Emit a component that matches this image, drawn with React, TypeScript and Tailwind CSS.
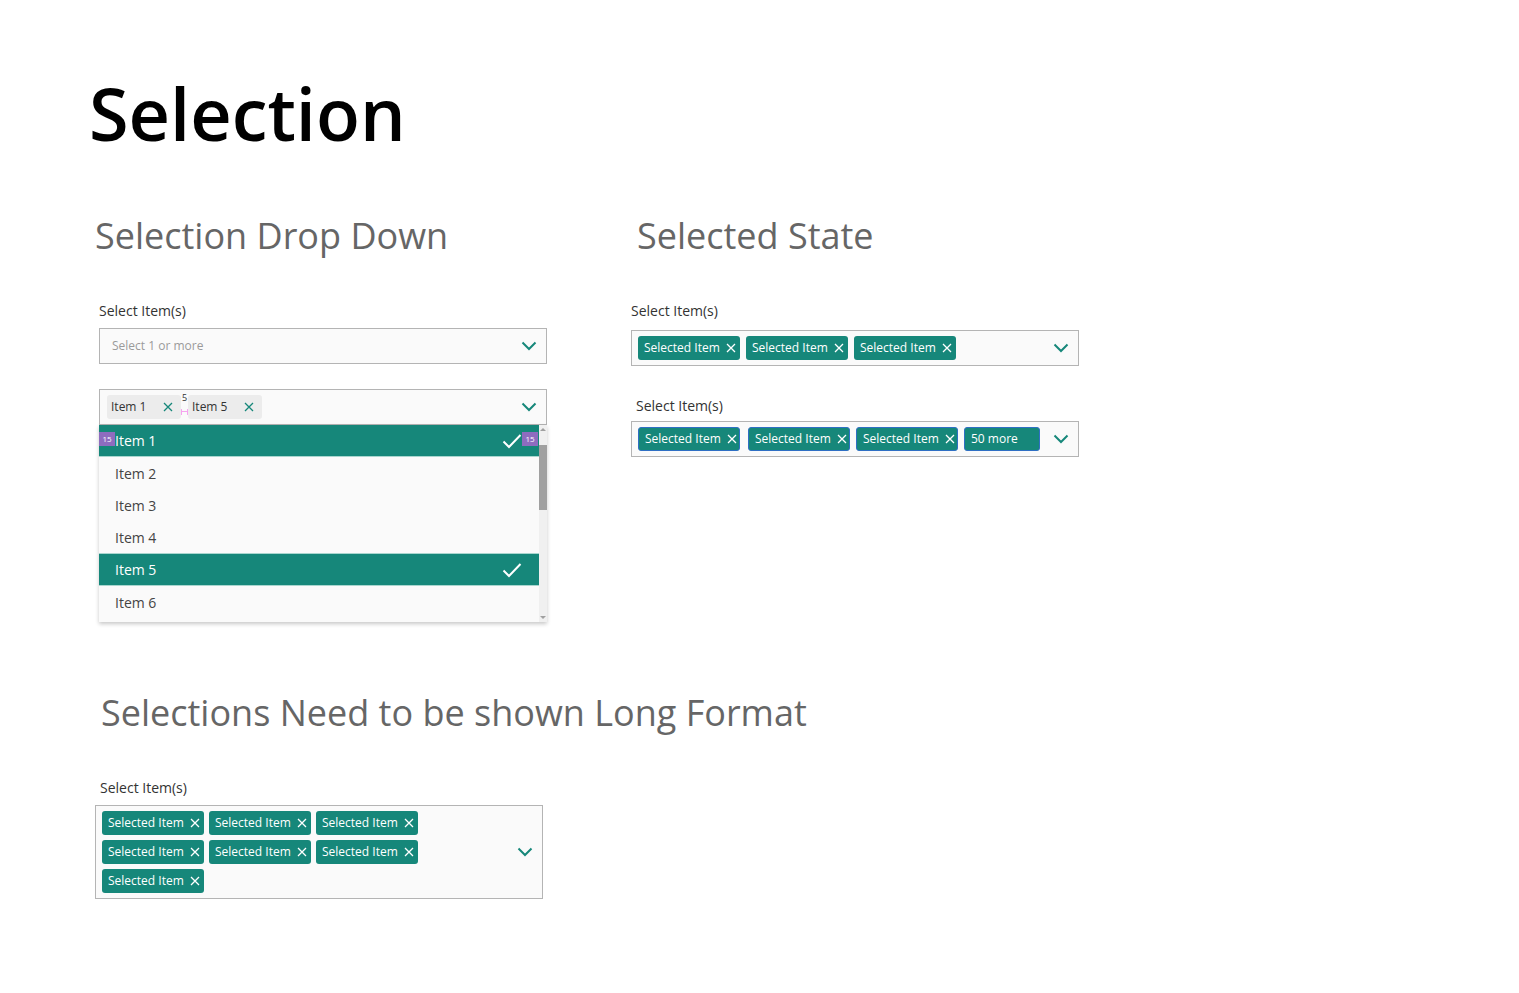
import React from "react";

const TEAL = "#16877a";

function Chevron() {
  return (
    <svg width="16" height="10" viewBox="0 0 16 10" className="shrink-0">
      <path d="M1.5 1.5 L8 8 L14.5 1.5" fill="none" stroke={TEAL} strokeWidth="2" />
    </svg>
  );
}

function Cross({ color = "#fff" }: { color?: string }) {
  return (
    <svg width="10" height="10" viewBox="0 0 10 10" className="shrink-0">
      <path d="M1 1 L9 9 M9 1 L1 9" fill="none" stroke={color} strokeWidth="1.3" />
    </svg>
  );
}

function Check() {
  return (
    <svg width="20" height="16" viewBox="0 0 20 16" className="shrink-0">
      <path d="M1.5 8.5 L7 14 L18.5 2" fill="none" stroke="#fff" strokeWidth="2" />
    </svg>
  );
}

function Chip({ label = "Selected Item", outlined = false }: { label?: string; outlined?: boolean }) {
  return (
    <span
      className={
        "flex h-[24px] w-[102px] shrink-0 items-center gap-[6px] rounded-[3px] bg-[#16877a] pl-[6px] pr-[5px] text-[12px] text-white " +
        (outlined ? "border border-[#2f6fc4]" : "")
      }
    >
      <span className="flex-1 whitespace-nowrap">{label}</span>
      <Cross />
    </span>
  );
}

function Label({ children }: { children: React.ReactNode }) {
  return <div className="text-[14px] leading-[18px] text-[#333]">{children}</div>;
}

function Badge() {
  return (
    <span className="flex h-[14px] w-[16px] items-center justify-center bg-[#8e6cbf] text-[8px] leading-none text-white">
      15
    </span>
  );
}

function Row({ text, selected, badges }: { text: string; selected?: boolean; badges?: boolean }) {
  if (selected) {
    return (
      <div className="relative flex h-[32px] items-center border-b border-[#a9d6cf] bg-[#16877a] pl-[16px] pr-[17px] text-[14px] text-white">
        {badges && (
          <span className="absolute left-0 top-[7px]">
            <Badge />
          </span>
        )}
        <span className="flex-1">{text}</span>
        <Check />
        {badges && (
          <span className="absolute right-[1px] top-[7px]">
            <Badge />
          </span>
        )}
      </div>
    );
  }
  return <div className="flex h-[32px] items-center pl-[16px] text-[14px] text-[#444]">{text}</div>;
}

export default function App() {
  return (
    <div className="min-h-screen bg-white font-['Open_Sans',sans-serif] text-[#333]">
      <h1 className="pl-[89px] pt-[70px] text-[72px] font-semibold leading-[86px] text-black">Selection</h1>

      <div className="mt-[58px] flex">
        {/* left column */}
        <div className="ml-[95px] w-[452px]">
          <h2 className="whitespace-nowrap text-[36px] leading-[44px] text-[#666]">Selection Drop Down</h2>
          <div className="mt-[44px] pl-[4px]">
            <Label>Select Item(s)</Label>
            <div className="mt-[8px] flex h-[36px] w-[448px] items-center border border-[#b4b4b4] bg-[#fafafa] pl-[12px] pr-[9px]">
              <span className="flex-1 text-[12px] text-[#9a9a9a]">Select 1 or more</span>
              <Chevron />
            </div>

            <div className="mt-[25px] w-[448px]">
              <div className="flex h-[36px] items-center border border-[#b4b4b4] bg-[#fafafa] pl-[7px] pr-[9px]">
                <span className="flex h-[24px] w-[74px] items-center gap-[6px] rounded-[3px] bg-[#ececec] pl-[4px] pr-[8px] text-[12px] text-[#333]">
                  <span className="flex-1">Item 1</span>
                  <Cross color={TEAL} />
                </span>
                <span className="relative h-[24px] w-[7px] shrink-0">
                  <span className="absolute left-0 top-[14px] h-[6px] w-[7px] border-x border-[#f6a3f0]" />
                  <span className="absolute left-0 top-[16px] h-px w-[7px] bg-[#f6a3f0]" />
                  <span className="absolute left-[1px] -top-[2px] text-[9px] leading-none text-[#333]">5</span>
                </span>
                <span className="flex h-[24px] w-[74px] items-center gap-[6px] rounded-[3px] bg-[#ececec] pl-[4px] pr-[8px] text-[12px] text-[#333]">
                  <span className="flex-1">Item 5</span>
                  <Cross color={TEAL} />
                </span>
                <span className="flex-1" />
                <Chevron />
              </div>

              <div className="flex h-[197px] bg-[#fafafa] shadow-[0_2px_4px_rgba(0,0,0,0.22)]">
                <div className="flex-1">
                  <Row text="Item 1" selected badges />
                  <Row text="Item 2" />
                  <Row text="Item 3" />
                  <Row text="Item 4" />
                  <div className="border-t border-[#a9d6cf]">
                    <Row text="Item 5" selected />
                  </div>
                  <Row text="Item 6" />
                </div>
                <div className="flex w-[8px] flex-col items-center bg-[#f0f0f0]">
                  <span className="mt-[3px] h-0 w-0 border-x-[3px] border-b-[3px] border-x-transparent border-b-[#a0a0a0]" />
                  <span className="mt-[14px] h-[65px] w-[8px] bg-[#a0a0a0]" />
                  <span className="flex-1" />
                  <span className="mb-[3px] h-0 w-0 border-x-[3px] border-t-[3px] border-x-transparent border-t-[#a0a0a0]" />
                </div>
              </div>
            </div>
          </div>
        </div>

        {/* right column */}
        <div className="ml-[84px] w-[448px]">
          <h2 className="whitespace-nowrap pl-[6px] text-[36px] leading-[44px] text-[#666]">Selected State</h2>
          <div className="mt-[44px]">
            <Label>Select Item(s)</Label>
            <div className="mt-[10px] flex h-[36px] items-center gap-[6px] border border-[#b4b4b4] bg-[#fafafa] pl-[6px] pr-[9px]">
              <Chip />
              <Chip />
              <Chip />
              <span className="flex-1" />
              <Chevron />
            </div>

            <div className="mt-[31px] pl-[5px]">
              <Label>Select Item(s)</Label>
            </div>
            <div className="mt-[6px] flex h-[36px] items-center border border-[#b4b4b4] bg-[#fafafa] pl-[6px] pr-[9px]">
              <Chip outlined />
              <span className="ml-[8px]">
                <Chip outlined />
              </span>
              <span className="ml-[6px]">
                <Chip outlined />
              </span>
              <span className="ml-[6px] flex h-[24px] w-[76px] items-center rounded-[3px] border border-[#2f6fc4] bg-[#16877a] pl-[6px] text-[12px] text-white">
                50 more
              </span>
              <span className="flex-1" />
              <Chevron />
            </div>
          </div>
        </div>
      </div>

      {/* long format */}
      <div className="ml-[95px] mt-[69px] w-[448px]">
        <h2 className="whitespace-nowrap pl-[6px] text-[36px] leading-[44px] text-[#666]">
          Selections Need to be shown Long Format
        </h2>
        <div className="mt-[44px] pl-[5px]">
          <Label>Select Item(s)</Label>
        </div>
        <div className="mt-[8px] flex h-[94px] items-center border border-[#b4b4b4] bg-[#fafafa] pl-[6px] pr-[9px]">
          <div className="flex flex-1 flex-col gap-[5px]">
            <div className="flex gap-[5px]">
              <Chip />
              <Chip />
              <Chip />
            </div>
            <div className="flex gap-[5px]">
              <Chip />
              <Chip />
              <Chip />
            </div>
            <div className="flex gap-[5px]">
              <Chip />
            </div>
          </div>
          <Chevron />
        </div>
      </div>
    </div>
  );
}
